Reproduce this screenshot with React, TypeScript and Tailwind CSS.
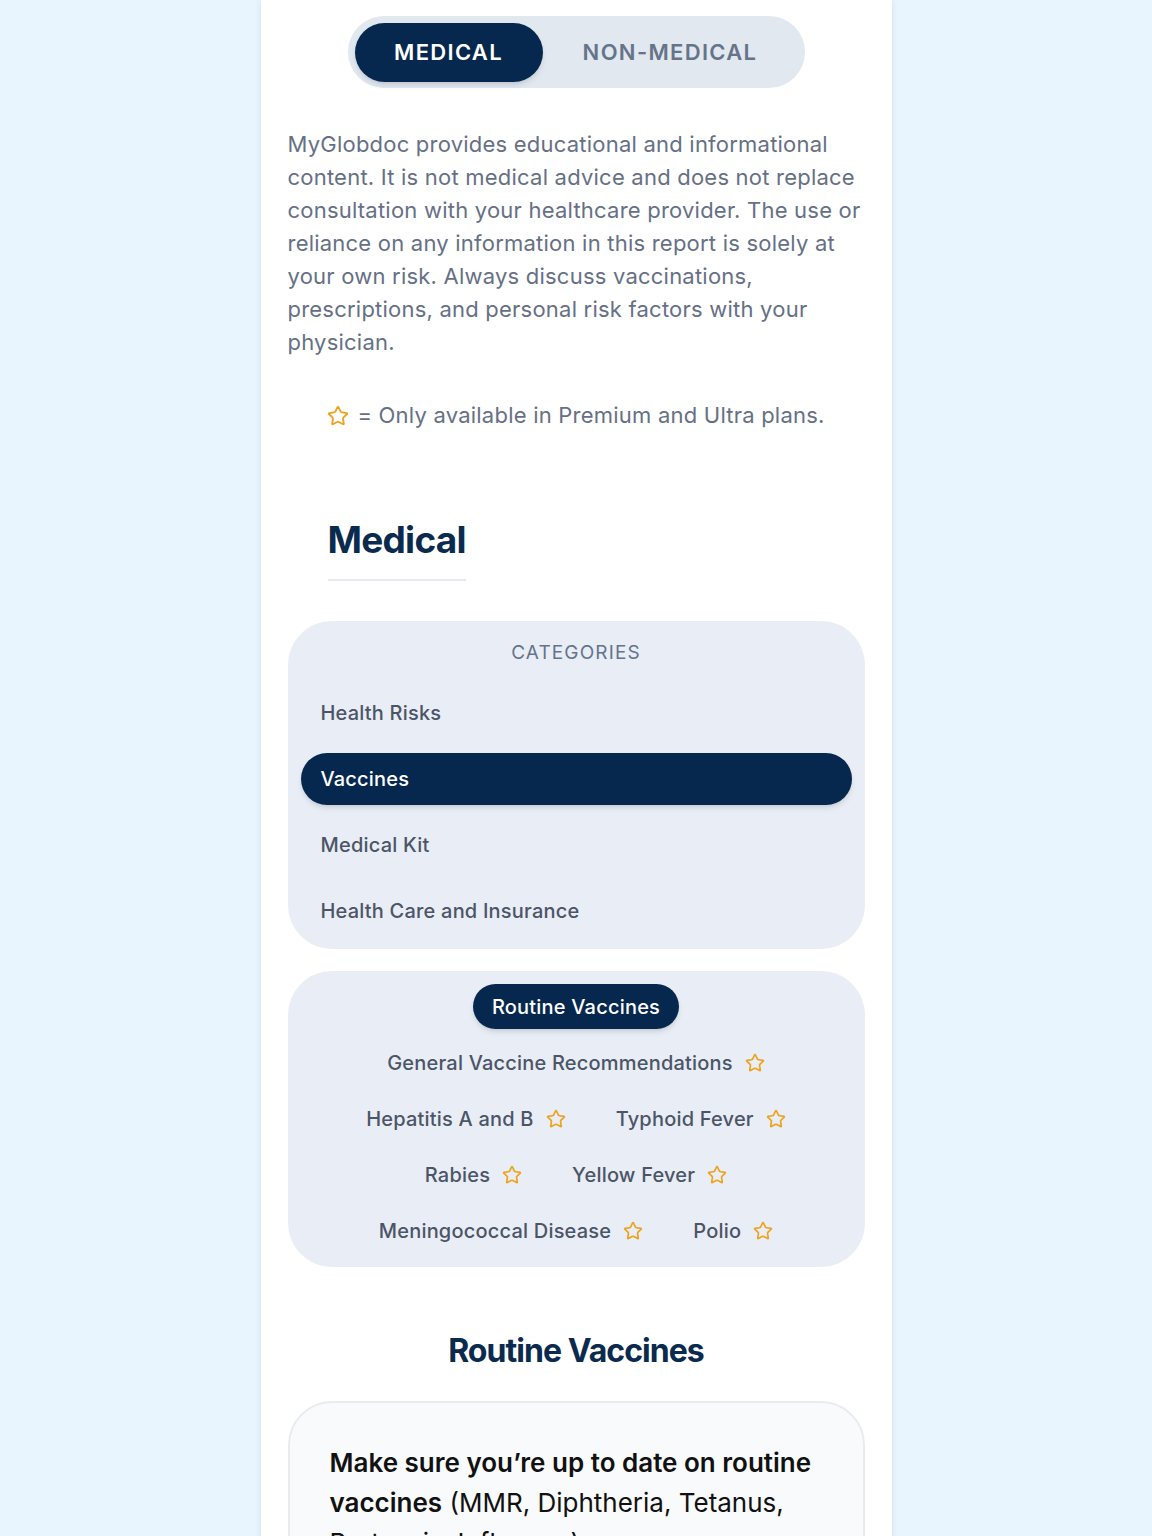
import { Star } from "lucide-react";

type Vaccine = {
  name: string;
  premium?: boolean;
};

const categories = ["Health Risks", "Vaccines", "Medical Kit", "Health Care and Insurance"];

const vaccineRows: Vaccine[][] = [
  [{ name: "General Vaccine Recommendations", premium: true }],
  [
    { name: "Hepatitis A and B", premium: true },
    { name: "Typhoid Fever", premium: true },
  ],
  [
    { name: "Rabies", premium: true },
    { name: "Yellow Fever", premium: true },
  ],
  [
    { name: "Meningococcal Disease", premium: true },
    { name: "Polio", premium: true },
  ],
];

function PremiumStar({ size = 20 }: { size?: number }) {
  return <Star size={size} strokeWidth={2} className="shrink-0 text-[#eea21e]" />;
}

function ModeToggle() {
  return (
    <div className="flex justify-center pt-4">
      <div className="flex h-[72px] w-[457px] items-center rounded-full bg-[#e2e8f0] p-[7px]">
        <button className="h-[59px] w-[188px] rounded-full bg-[#06284f] text-[22px] font-semibold tracking-[0.06em] text-white shadow-md">
          MEDICAL
        </button>
        <button className="h-[59px] flex-1 rounded-full text-[22px] font-semibold tracking-[0.06em] text-[#667489]">
          NON-MEDICAL
        </button>
      </div>
    </div>
  );
}

function CategoryList() {
  return (
    <div className="rounded-[44px] bg-[#e9edf5] px-[13px] pt-5 pb-3">
      <div className="h-6 text-center text-[19px] leading-6 tracking-[0.06em] text-[#64748b]">
        CATEGORIES
      </div>
      <div className="mt-[22px] flex flex-col gap-[14px]">
        {categories.map((c) =>
          c === "Vaccines" ? (
            <div
              key={c}
              className="flex h-[52px] items-center rounded-full bg-[#06284f] px-5 text-[20px] font-medium tracking-[0.01em] text-white shadow-md"
            >
              {c}
            </div>
          ) : (
            <div
              key={c}
              className="flex h-[52px] items-center px-5 text-[20px] font-medium tracking-[0.01em] text-[#4b5567]"
            >
              {c}
            </div>
          )
        )}
      </div>
    </div>
  );
}

function VaccineList() {
  return (
    <div className="flex flex-col items-center rounded-[44px] bg-[#e9edf5] pt-[13px] pb-5">
      <div className="flex h-[45px] w-[206px] items-center justify-center rounded-full bg-[#06284f] text-[20px] font-medium tracking-[0.01em] text-white shadow-md">
        Routine Vaccines
      </div>
      <div className="mt-[18px] flex flex-col gap-6">
        {vaccineRows.map((row, i) => (
          <div key={i} className="flex h-8 items-center justify-center gap-[50px]">
            {row.map((v) => (
              <div
                key={v.name}
                className="flex items-center gap-3 text-[20px] font-medium tracking-[0.01em] text-[#4b5567]"
              >
                <span>{v.name}</span>
                {v.premium ? <PremiumStar /> : null}
              </div>
            ))}
          </div>
        ))}
      </div>
    </div>
  );
}

export default function App() {
  return (
    <div className="min-h-screen bg-[#e8f4fe] font-['Inter','Liberation_Sans',sans-serif]">
      <div className="mx-auto min-h-[1536px] w-[631px] bg-white px-[27px] shadow-[0_0_6px_rgba(120,140,170,0.18)]">
        <ModeToggle />

        <p className="mt-10 text-[22px] leading-[33px] tracking-[0.01em] text-[#667085]">
          MyGlobdoc provides educational and informational content. It is not medical advice and does not
          replace consultation with your healthcare provider. The use or reliance on any information in this
          report is solely at your own risk. Always discuss vaccinations, prescriptions, and personal risk
          factors with your physician.
        </p>

        <div className="mt-10 flex items-center justify-center gap-2 text-[22px] leading-[33px] tracking-[0.01em] text-[#667085]">
          <PremiumStar size={22} />
          <span>= Only available in Premium and Ultra plans.</span>
        </div>

        <div className="mt-[85px] pl-10">
          <h1 className="inline-block border-b-2 border-[#e6e9ee] pb-4 text-[37px] leading-[46px] font-bold tracking-[-0.02em] text-[#0a2b4e]">
            Medical
          </h1>
        </div>

        <div className="mt-10 flex flex-col gap-[22px]">
          <CategoryList />
          <VaccineList />
        </div>

        <h2 className="mt-16 text-center text-[32px] leading-10 font-bold tracking-[-0.03em] text-[#0a2b4e]">
          Routine Vaccines
        </h2>

        <div className="mt-[30px] rounded-[44px] border-2 border-[#e8ebef] bg-[#f9fafb] px-10 pt-10 pb-10">
          <p className="text-[26px] leading-10 text-[#111111]">
            <span className="font-semibold">Make sure you’re up to date on routine vaccines</span> (MMR,
            Diphtheria, Tetanus, Pertussis, Influenza).
          </p>
        </div>
      </div>
    </div>
  );
}
